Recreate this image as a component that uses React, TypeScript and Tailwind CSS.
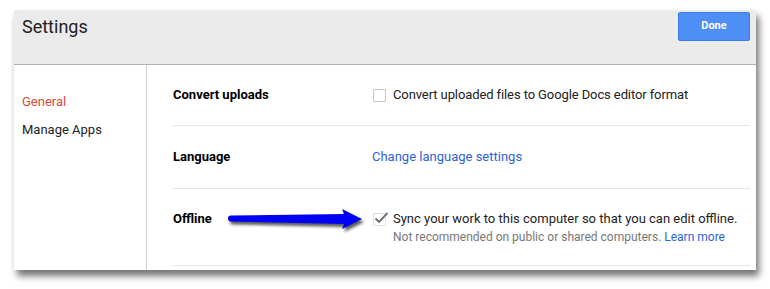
import React from 'react';

const font = { fontFamily: 'Roboto, "Liberation Sans", Arial, sans-serif' };

const Checkbox: React.FC<{ checked?: boolean }> = ({ checked }) => (
  <span
    className={
      'relative inline-block w-[13px] h-[13px] shrink-0 border bg-white rounded-[1px] ' +
      (checked ? 'border-[#e0e0e0]' : 'border-[#c6c6c6]')
    }
  >
    {checked && (
      <svg className="absolute left-[0px] top-[-4px]" width="16" height="15" viewBox="0 0 16 15">
        <path d="M1.5 8.5 L5 12 L13.5 3" fill="none" stroke="#707070" strokeWidth="1.9" />
      </svg>
    )}
  </span>
);

const Arrow = () => (
  <svg className="absolute left-[226px] top-[205px]" width="145" height="32" viewBox="0 0 145 32">
    <defs>
      <filter id="blur" x="-10%" y="-50%" width="120%" height="200%">
        <feGaussianBlur stdDeviation="1.6" />
      </filter>
    </defs>
    <path
      d="M5 10.5 L118 9 L116 4 L136 14 L116 24 L118 19 L5 16.5 A3 3 0 0 1 5 10.5 Z"
      fill="#000"
      opacity="0.65"
      transform="translate(2 3)"
      filter="url(#blur)"
    />
    <path d="M5 10.5 L118 9 L116 4 L136 14 L116 24 L118 19 L5 16.5 A3 3 0 0 1 5 10.5 Z" fill="#0000f4" />
  </svg>
);

export default function App() {
  return (
    <div className="relative w-[770px] h-[289px] bg-white pl-[14px] pt-[10px]" style={font}>
      <div className="w-[742px] h-[260px] flex flex-col bg-white shadow-[3px_6px_7px_rgba(0,0,0,0.55)]">
        <div className="h-[55px] shrink-0 bg-[#ebebeb] border-b border-[#b3b3b3] flex justify-between pl-[8px] pr-[6px]">
          <div className="pt-[5px] text-[18px] leading-[24px] text-[#222]">Settings</div>
          <button className="mt-[2px] w-[72px] h-[29px] rounded-[2px] bg-[#4d8ff4] border border-[#3a7ce8] text-white text-[11px] font-bold">
            Done
          </button>
        </div>
        <div className="flex flex-1">
          <div className="w-[133px] shrink-0 border-r border-[#cfcfcf] pl-[8px] pt-[23px] text-[13px] leading-[28px]">
            <div className="text-[#dd4b39]">General</div>
            <div className="text-[#222]">Manage Apps</div>
          </div>
          <div className="flex-1 pl-[26px] pr-[6px] text-[13px] text-[#222]">
            <div className="h-[61px] flex items-center border-b border-[#e5e5e5]">
              <div className="w-[199px] font-bold text-black">Convert uploads</div>
              <label className="flex items-center gap-[7px] pl-[1px]">
                <Checkbox />
                <span className="tracking-[-0.1px]">Convert uploaded files to Google Docs editor format</span>
              </label>
            </div>
            <div className="h-[63px] flex items-center border-b border-[#e5e5e5]">
              <div className="w-[199px] font-bold text-black">Language</div>
              <a className="text-[#2d62d6]">Change language settings</a>
            </div>
            <div className="h-[77px] flex items-start pt-[20px] border-b border-[#e5e5e5] leading-[19px]">
              <div className="w-[199px] font-bold text-black">Offline</div>
              <div className="flex items-start gap-[7px] pl-[1px]">
                <span className="mt-[3px]">
                  <Checkbox checked />
                </span>
                <div className="whitespace-nowrap">
                  <div>Sync your work to this computer so that you can edit offline.</div>
                  <div className="text-[#777] text-[12px]">
                    Not recommended on public or shared computers. <a className="text-[#2d62d6]">Learn more</a>
                  </div>
                </div>
              </div>
            </div>
          </div>
        </div>
      </div>
      <Arrow />
    </div>
  );
}
